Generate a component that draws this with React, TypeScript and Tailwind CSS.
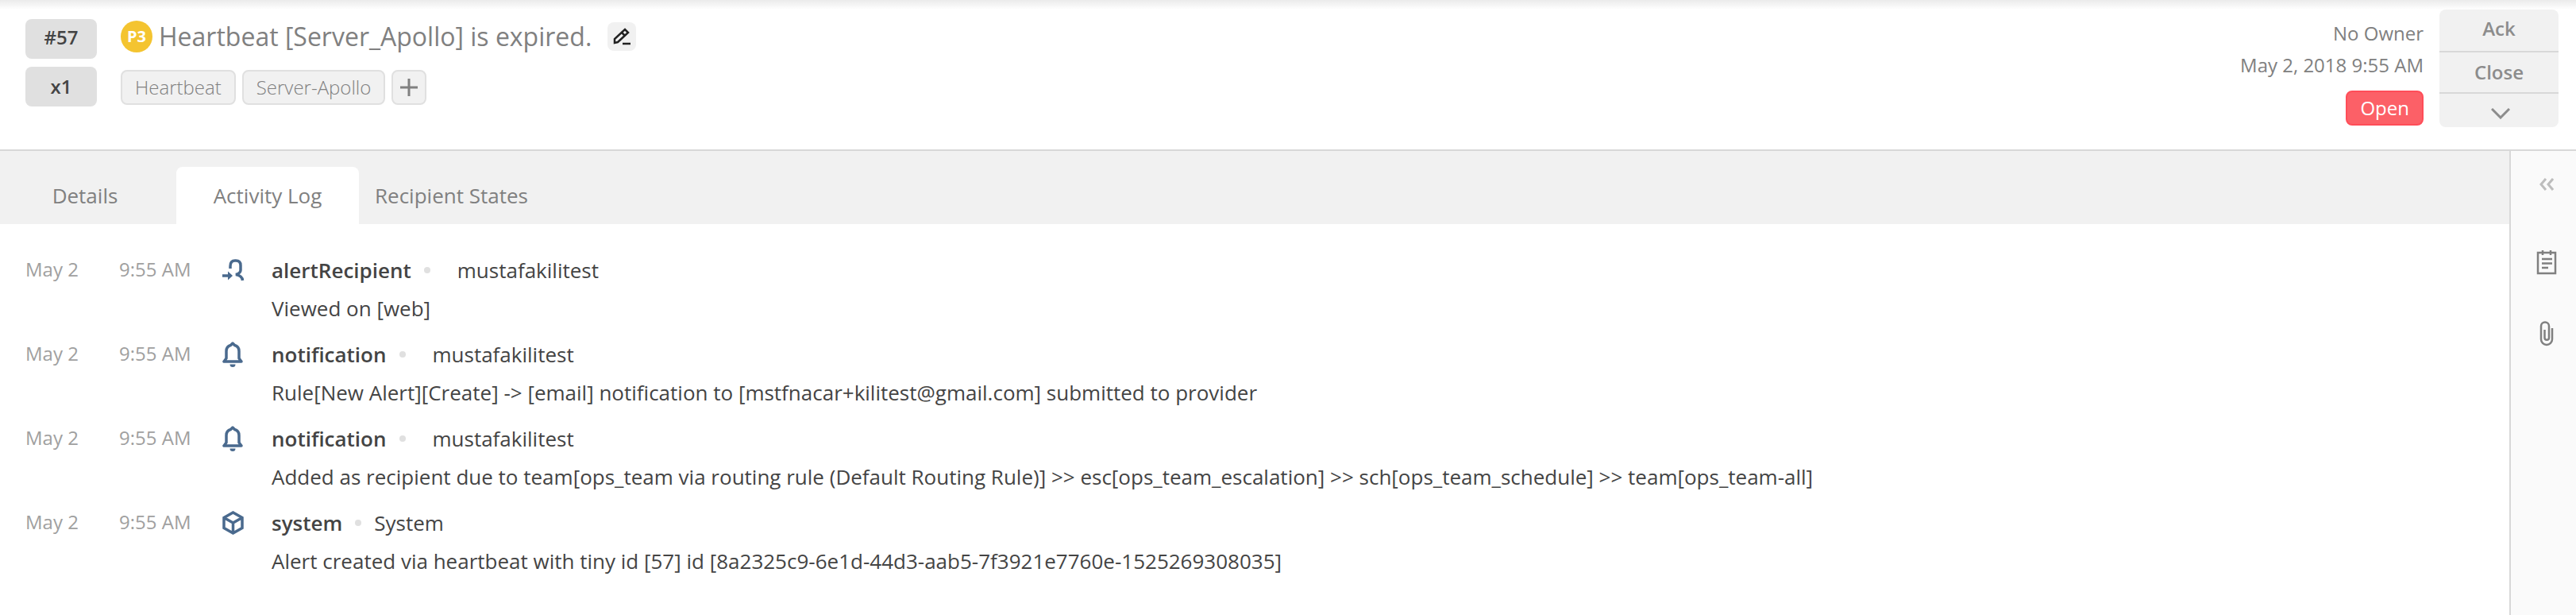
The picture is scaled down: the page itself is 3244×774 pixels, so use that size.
import type { ReactNode } from 'react';

type LogEntry = {
  icon: ReactNode;
  type: string;
  owner: string;
  isSystem?: boolean;
  message: string;
};

const TAGS = ['Heartbeat', 'Server-Apollo'];

const TABS = [
  { label: 'Details', className: 'w-[214px]' },
  { label: 'Activity Log', className: 'w-[230px] ml-2 bg-white' },
  { label: 'Recipient States', className: 'px-5' },
];

const LOGS: LogEntry[] = [
  { icon: <RecipientIcon />, type: 'alertRecipient', owner: 'mustafakilitest', message: 'Viewed on [web]' },
  {
    icon: <BellIcon />,
    type: 'notification',
    owner: 'mustafakilitest',
    message: 'Rule[New Alert][Create] -> [email] notification to [mstfnacar+kilitest@gmail.com] submitted to provider',
  },
  {
    icon: <BellIcon />,
    type: 'notification',
    owner: 'mustafakilitest',
    message:
      'Added as recipient due to team[ops_team via routing rule (Default Routing Rule)] >> esc[ops_team_escalation] >> sch[ops_team_schedule] >> team[ops_team-all]',
  },
  {
    icon: <CubeIcon />,
    type: 'system',
    owner: 'System',
    isSystem: true,
    message: 'Alert created via heartbeat with tiny id [57] id [8a2325c9-6e1d-44d3-aab5-7f3921e7760e-1525269308035]',
  },
];

export default function App() {
  return (
    <div className="min-h-screen flex flex-col bg-white font-['Open_Sans',sans-serif] text-[26px] leading-9 text-[#808080]">
      <AlertHeader />
      <div className="flex-1 flex">
        <main className="flex-1 min-w-0">
          <Tabs />
          <ul className="pt-[34px] pb-10">
            {LOGS.map((log, i) => (
              <LogRow key={i} log={log} />
            ))}
          </ul>
        </main>
        <SideRail />
      </div>
    </div>
  );
}

function AlertHeader() {
  return (
    <header className="h-[190px] flex items-start border-b-2 border-[#d8d8d8] bg-linear-to-b from-[#ebebeb] to-white to-[12px] pl-8 pr-[22px]">
      <div className="flex flex-col gap-[10px] pt-6 mr-[30px] text-2xl font-semibold text-[#444]">
        <span className="w-[90px] h-[50px] pb-1 flex items-center justify-center rounded-lg bg-[#e0e0e0]">#57</span>
        <span className="w-[90px] h-[50px] flex items-center justify-center rounded-lg bg-[#e0e0e0]">x1</span>
      </div>

      <div className="flex-1 min-w-0 pt-6">
        <div className="h-11 flex items-center">
          <span className="size-10 mr-2 flex items-center justify-center rounded-full bg-[#f4c430] text-xl font-bold text-white">P3</span>
          <h1 className="text-[32px] leading-11">Heartbeat [Server_Apollo] is expired.</h1>
          <button aria-label="Edit message" className="size-9 ml-5 flex items-center justify-center rounded-lg bg-[#f1f1f1] text-[#222]">
            <PencilIcon />
          </button>
        </div>
        <div className="flex gap-2 pt-5 text-2xl">
          {TAGS.map((tag) => (
            <span key={tag} className="h-11 px-4 flex items-center rounded-lg border-2 border-[#e0e0e0] bg-[#f1f1f1] font-light">
              {tag}
            </span>
          ))}
          <button aria-label="Add tag" className="size-11 flex items-center justify-center rounded-lg border-2 border-[#e0e0e0] bg-[#f1f1f1]">
            <svg width="22" height="22" viewBox="0 0 22 22" stroke="currentColor" strokeWidth="3">
              <path d="M11 0V22M0 11H22" />
            </svg>
          </button>
        </div>
      </div>

      <div className="flex flex-col items-end pt-[22px] mr-5 text-2xl leading-10">
        <span>No Owner</span>
        <span>May 2, 2018 9:55 AM</span>
        <span className="h-11 px-4 mt-3 flex items-center rounded-lg border-2 border-[#ff4d58] bg-[#fc6067] text-white">Open</span>
      </div>

      <div className="w-[150px] mt-3 flex flex-col divide-y-2 divide-[#d8d8d8] overflow-hidden rounded-lg bg-[#f1f1f1] text-2xl font-semibold text-[#8c8c8c]">
        <button className="h-[54px] pb-1">Ack</button>
        <button className="h-[52px]">Close</button>
        <button aria-label="More actions" className="h-[42px] pt-2 pl-1 flex items-center justify-center">
          <svg width="24" height="14" viewBox="0 0 24 14" fill="none" stroke="currentColor" strokeWidth="3">
            <path d="M1 1L12 12L23 1" />
          </svg>
        </button>
      </div>
    </header>
  );
}

function Tabs() {
  return (
    <nav className="h-[92px] flex items-end bg-[#f1f1f1]">
      {TABS.map((tab) => (
        <button key={tab.label} className={`h-[72px] rounded-t-lg ${tab.className}`}>
          {tab.label}
        </button>
      ))}
    </nav>
  );
}

function LogRow({ log }: { log: LogEntry }) {
  return (
    <li className="flex pl-8 pb-[10px] leading-12 text-[#444]">
      <span className="w-[118px] text-2xl leading-[46px] text-[#a0a0a0]">May 2</span>
      <span className="w-[130px] text-2xl leading-[46px] text-[#a0a0a0]">9:55 AM</span>
      <span className="w-[62px] h-12 flex items-center text-[#4a6a8e]">{log.icon}</span>
      <div>
        <div className="flex items-center">
          <span className="font-semibold">{log.type}</span>
          <span className="size-2 ml-4 rounded-full bg-[#e0e0e0]" />
          <span className={log.isSystem ? 'ml-4' : 'ml-[34px]'}>{log.owner}</span>
        </div>
        <p>{log.message}</p>
      </div>
    </li>
  );
}

function SideRail() {
  return (
    <aside className="w-21 pt-[34px] pl-2 flex flex-col items-center border-l-2 border-[#d8d8d8] bg-[#fafafa]">
      <button aria-label="Expand panel" className="h-4 text-[#bdbdbd]">
        <svg className="block" width="18" height="16" viewBox="0 0 18 16" fill="none" stroke="currentColor" strokeWidth="3">
          <path d="M8 1L2 8L8 15M17 1L11 8L17 15" />
        </svg>
      </button>
      <button aria-label="Notes" className="h-8 mt-[74px]">
        <NoteIcon />
      </button>
      <button aria-label="Attachments" className="h-8 mt-[58px]">
        <ClipIcon />
      </button>
    </aside>
  );
}

function PencilIcon() {
  return (
    <svg width="22" height="22" viewBox="0 0 22 22" fill="none" stroke="currentColor" strokeWidth="2.500">
      <path d="M2 19V14L15 2L19 6L6 18Z" />
      <path d="M11 6L15 10" />
      <path d="M12 20H22" />
    </svg>
  );
}

function RecipientIcon() {
  return (
    <svg width="28" height="28" viewBox="0 0 28 28" fill="none" stroke="currentColor" strokeWidth="3.500">
      <path d="M10 12V9Q10 2 16 2H17Q23 2 23 8V14Q23 18 17 19.500Q25 21 25.500 27" />
      <path d="M0 21H8" />
      <path d="M7 15.500L13 21L7 26.500Z" fill="currentColor" stroke="none" />
    </svg>
  );
}

function BellIcon() {
  return (
    <svg width="26" height="32" viewBox="0 0 26 32" fill="none" stroke="currentColor" strokeWidth="3.500" strokeLinejoin="round">
      <path d="M2 25H24L21 21V12Q21 6 15.500 4.500L13 2L10.500 4.500Q5 6 5 12V21Z" />
      <path d="M9.500 28.500A3.500 3.500 0 0 0 16.500 28.500Z" fill="currentColor" stroke="none" />
    </svg>
  );
}

function CubeIcon() {
  return (
    <svg width="27" height="30" viewBox="0 0 27 30" fill="none" stroke="currentColor" strokeWidth="3.500">
      <path d="M13.500 2L25 8.500V21.500L13.500 28L2 21.500V8.500ZM2 8.500L13.500 15L25 8.500M13.500 15V28" />
    </svg>
  );
}

function NoteIcon() {
  return (
    <svg className="block" width="26" height="32" viewBox="0 0 26 32" fill="none" stroke="currentColor" strokeWidth="2.500">
      <path d="M2 4H24V30H2ZM8 1V7M18 1V7M7 12H20M7 17.500H20M7 23H15" />
    </svg>
  );
}

function ClipIcon() {
  return (
    <svg className="block" width="18" height="32" viewBox="0 0 18 32" fill="none" stroke="currentColor" strokeWidth="2.500">
      <path d="M16 9V23A7 7 0 0 1 2 23V6.500A5 5 0 0 1 12 6.500V21A2.500 2.500 0 0 1 6.500 21V11" />
    </svg>
  );
}
